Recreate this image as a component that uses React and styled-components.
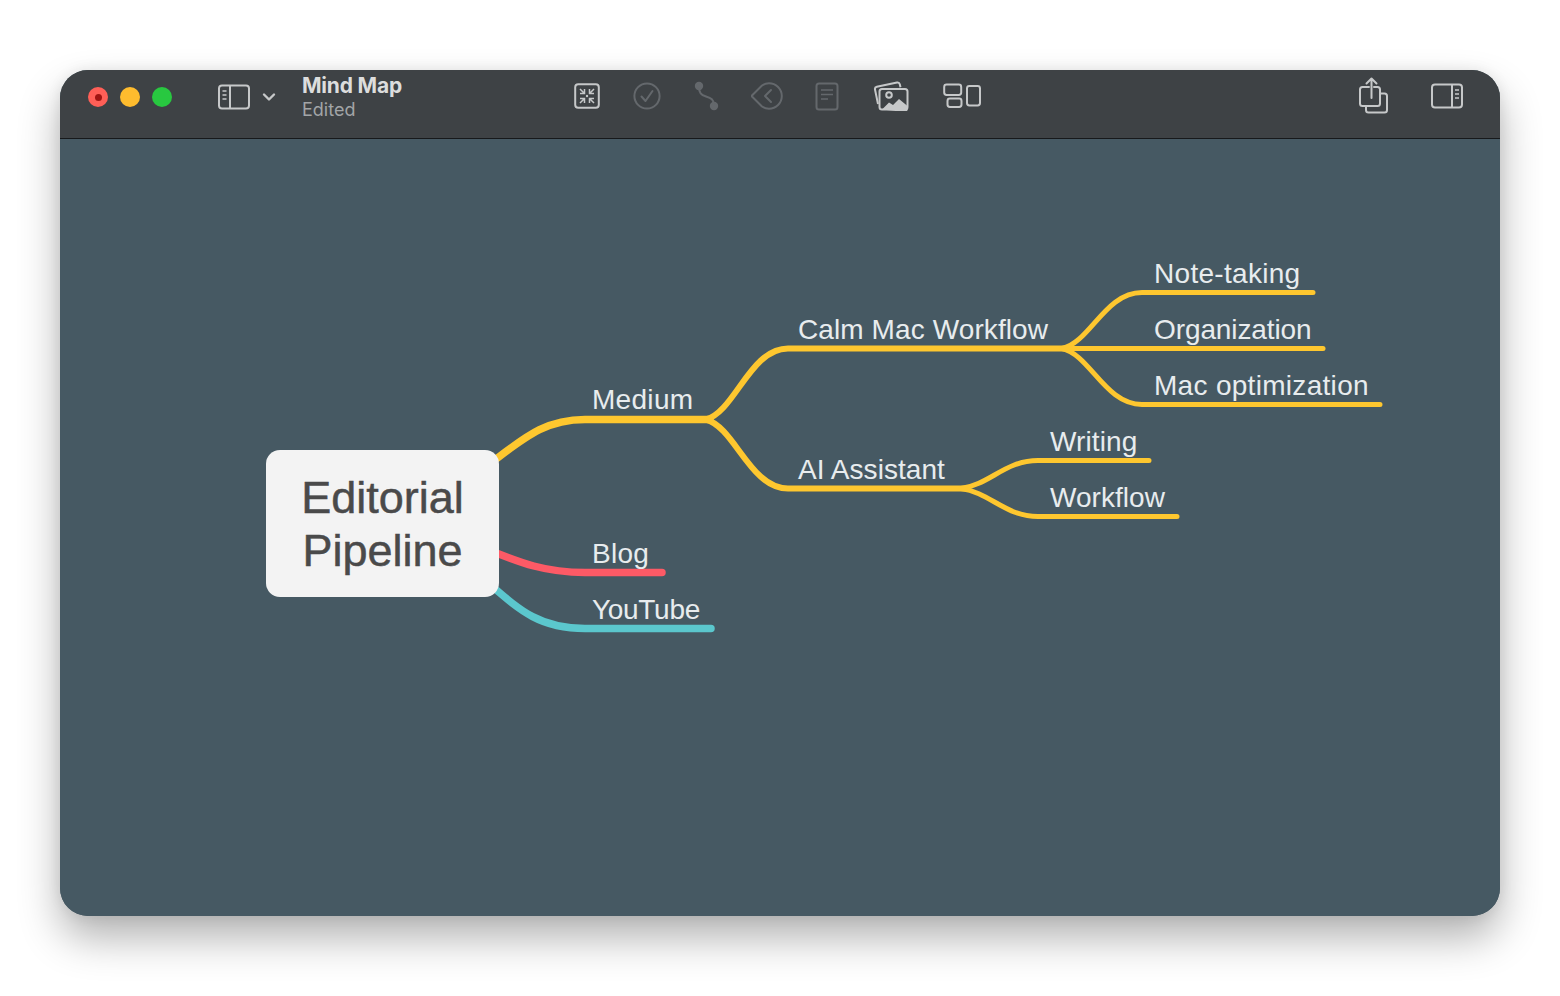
import React from "react";
import styled, { createGlobalStyle } from "styled-components";

const Global = createGlobalStyle`
  html, body { margin: 0; padding: 0; background: #fff; }
  body { font-family: "Liberation Sans", Arial, sans-serif; }
`;

const Page = styled.div`
  width: 1560px;
  height: 996px;
  box-sizing: border-box;
  padding: 70px 60px 80px;
  overflow: hidden;
  background: #fff;
`;

const Window = styled.div`
  height: 846px;
  display: flex;
  flex-direction: column;
  border-radius: 28px;
  overflow: hidden;
  background: #465963;
  box-shadow: 0 22px 42px rgba(0, 0, 0, 0.3), 0 0 14px rgba(0, 0, 0, 0.08);
`;

const TitleBar = styled.header`
  flex: none;
  height: 69px;
  box-sizing: border-box;
  display: flex;
  align-items: center;
  padding: 0 20px 16px 28px;
  background: #3e4245;
  border-bottom: 1px solid #17191b;
`;

const Lights = styled.div`
  display: flex;
  gap: 12px;
  margin-right: 46px;
  margin-top: 2px;
`;

const Light = styled.span`
  width: 20px;
  height: 20px;
  border-radius: 50%;
  background: ${(p) => p.$color};
  display: flex;
  align-items: center;
  justify-content: center;
  &::after {
    content: "";
    width: ${(p) => (p.$dot ? "7px" : "0")};
    height: ${(p) => (p.$dot ? "7px" : "0")};
    border-radius: 50%;
    background: #a01512;
  }
`;

const SidebarToggle = styled.div`
  display: flex;
  align-items: center;
  gap: 12px;
  margin-right: 26px;
  margin-top: 1px;
`;

const TitleBlock = styled.div`
  width: 255px;
  display: flex;
  flex-direction: column;
  margin-top: 2px;
  font-family: Inter, "Liberation Sans", sans-serif;
`;

const Title = styled.div`
  font-size: 21px;
  line-height: 25px;
  font-weight: 700;
  color: #dcdddd;
  letter-spacing: -0.2px;
`;

const Subtitle = styled.div`
  font-size: 18px;
  line-height: 24px;
  color: #a2a5a7;
`;

const ToolGroup = styled.div`
  display: flex;
  align-items: center;
`;

const Slot = styled.div`
  width: ${(p) => p.$w}px;
  display: flex;
  justify-content: center;
`;

const Spacer = styled.div`
  flex: 1;
`;

const RightGroup = styled.div`
  display: flex;
  align-items: center;
  gap: 41px;
  margin-right: 17px;
`;

const Canvas = styled.main`
  flex: 1;
  position: relative;
  background: #465963;
`;

const Lines = styled.svg`
  position: absolute;
  inset: 0;
  width: 100%;
  height: 100%;
`;

const RootNode = styled.div`
  position: absolute;
  left: 206px;
  top: 311px;
  width: 233px;
  height: 147px;
  box-sizing: border-box;
  border-radius: 14px;
  background: #f3f3f3;
  color: #4a4a4a;
  display: flex;
  align-items: center;
  justify-content: center;
  text-align: center;
  font-size: 45px;
  line-height: 53px;
  -webkit-text-stroke: 0.5px #4a4a4a;
`;

const Label = styled.div`
  position: absolute;
  left: ${(p) => p.$x - 60}px;
  top: ${(p) => p.$y - 138}px;
  font-size: 28px;
  line-height: 32px;
  color: #e8ecee;
  white-space: nowrap;
  letter-spacing: ${(p) => p.$ls}px;
`;

const LIGHT = "#c6c8c9";
const DIM = "#64686c";

const SidebarIcon = () => (
  <svg width="32" height="26" viewBox="0 0 32 26" fill="none" stroke={LIGHT} strokeWidth="2">
    <rect x="1" y="1.5" width="30" height="23" rx="3" />
    <path d="M12 1.5v23" />
    <path d="M4.5 7h4M4.5 11h4M4.5 15h4" strokeWidth="1.6" />
  </svg>
);

const Chevron = () => (
  <svg width="14" height="10" viewBox="0 0 14 10" fill="none" stroke={LIGHT} strokeWidth="2.4" strokeLinecap="round" strokeLinejoin="round">
    <path d="M2 2.5l5 5 5-5" />
  </svg>
);

const FocusIcon = () => (
  <svg width="26" height="26" viewBox="0 0 26 26" fill="none" stroke={LIGHT} strokeWidth="2">
    <rect x="1.2" y="1.2" width="23.6" height="23.6" rx="3" />
    <g strokeWidth="1.5">
      <path d="M6 6l4.5 4.5M6 10.5h4.5V6" />
      <path d="M20 6l-4.5 4.5M20 10.5h-4.5V6" />
      <path d="M6 20l4.5-4.5M6 15.5h4.5V20" />
      <path d="M20 20l-4.5-4.5M20 15.5h-4.5V20" />
    </g>
    <circle cx="13" cy="13" r="1.2" fill={LIGHT} stroke="none" />
  </svg>
);

const CheckIcon = () => (
  <svg width="28" height="28" viewBox="0 0 28 28" fill="none" stroke={DIM} strokeWidth="2">
    <circle cx="14" cy="14" r="12.6" />
    <path d="M8.5 14.5l4 4.5 7-10" strokeLinecap="round" strokeLinejoin="round" />
  </svg>
);

const RouteIcon = () => (
  <svg width="26" height="30" viewBox="0 0 26 30" fill="none" stroke={DIM} strokeWidth="2">
    <circle cx="5" cy="5" r="4.2" fill={DIM} stroke="none" />
    <circle cx="20" cy="25" r="4.2" fill={DIM} stroke="none" />
    <path d="M5 6c0 6 2 8 7 9.5 5 1.500 8 3 8 9" />
  </svg>
);

const TagIcon = () => (
  <svg width="33" height="28" viewBox="1 0 33 28" fill="none" stroke={DIM} strokeWidth="2" strokeLinejoin="round">
    <path d="M1.500 14L12 3.500C14.500 1.800 16.500 1.200 19 1.200a12.800 12.800 0 0 1 0 25.600c-2.500 0-4.500-.6-7-2.300z" />
    <path d="M21 8l-6 6 6 6" strokeLinecap="round" />
  </svg>
);

const DocIcon = () => (
  <svg width="24" height="29" viewBox="0 0 24 29" fill="none" stroke={DIM} strokeWidth="2">
    <rect x="1.500" y="1.500" width="21" height="26" rx="2.500" />
    <path d="M6 8h12M6 12.500h12M6 17h7" strokeWidth="1.700" />
  </svg>
);

const PhotosIcon = () => (
  <svg width="36" height="30" viewBox="0 0 36 30" fill="none" stroke={LIGHT} strokeWidth="2">
    <path d="M5 23L2 8.500c-.3-1.500.4-2.500 1.800-2.800L24 1.500c1.500-.3 2.400.3 2.800 1.700l.7 3" />
    <rect x="6.500" y="8" width="28" height="20.500" rx="2.500" fill="#3e4245" />
    <circle cx="16" cy="14" r="2.800" />
    <path d="M9 28.500l7-7 4 2.500 6-6 8.500 7v3.500a2.500 2.500 0 0 1-2.500 2.500z" fill={LIGHT} stroke="none" />
  </svg>
);

const LayoutIcon = () => (
  <svg width="38" height="26" viewBox="0 0 38 26" fill="none" stroke={LIGHT} strokeWidth="2">
    <rect x="1.200" y="1.500" width="17" height="10.500" rx="2.400" />
    <rect x="4.500" y="15.500" width="14" height="8.500" rx="2.400" />
    <rect x="24" y="3" width="13" height="19.500" rx="2.400" />
  </svg>
);

const ShareIcon = () => (
  <svg width="32" height="38" viewBox="0 0 32 38" fill="none" stroke={LIGHT} strokeWidth="2" strokeLinecap="round" strokeLinejoin="round">
    <path d="M11 10H4.500A2.500 2.500 0 0 0 2 12.500v14A2.500 2.500 0 0 0 4.500 29h15a2.500 2.500 0 0 0 2.500-2.500v-14A2.500 2.500 0 0 0 19.500 10H16" />
    <path d="M8 29v4a2.500 2.500 0 0 0 2.500 2.500h16a2.500 2.500 0 0 0 2.500-2.500V19a2.500 2.500 0 0 0-2.500-2.500H22" />
    <path d="M13.500 21V2M8.500 6.500l5-5 5 5" />
  </svg>
);

const RightPanelIcon = () => (
  <svg width="32" height="26" viewBox="0 0 32 26" fill="none" stroke={LIGHT} strokeWidth="2">
    <rect x="1" y="1.500" width="30" height="23" rx="3" />
    <path d="M21 1.500v23" />
    <path d="M24 7h4M24 11h4M24 15h4" strokeWidth="1.600" />
  </svg>
);

const YELLOW = "#fec72f";

const edges = [
  { d: "M490 463C525 437 545 419 585 419H710", c: YELLOW, w: 7.5 },
  { d: "M706 419C735 411 750 348 788 348H1066", c: YELLOW, w: 6 },
  { d: "M706 419C735 427 750 488 788 488H966", c: YELLOW, w: 6 },
  { d: "M1062 348C1090 342 1105 292 1142 292H1313", c: YELLOW, w: 5 },
  { d: "M1062 348H1323", c: YELLOW, w: 5 },
  { d: "M1062 348C1090 354 1105 404 1142 404H1380", c: YELLOW, w: 5 },
  { d: "M961 488C990 484 1005 460 1038 460H1149", c: YELLOW, w: 5 },
  { d: "M961 488C990 492 1005 516 1038 516H1177", c: YELLOW, w: 5 },
  { d: "M490 550C520 562 545 572 585 572H662", c: "#fd5a66", w: 7.5 },
  { d: "M490 584C520 610 540 628 585 628H711", c: "#5bc7cd", w: 7.5 },
];

const labels = [
  ["Medium", 592, 383, 0.3],
  ["Calm Mac Workflow", 798, 313, 0.1],
  ["AI Assistant", 798, 453, 0.05],
  ["Note-taking", 1154, 257, 0.3],
  ["Organization", 1154, 313, -0.1],
  ["Mac optimization", 1154, 369, 0.3],
  ["Writing", 1050, 425, 0.1],
  ["Workflow", 1050, 481, 0.05],
  ["Blog", 592, 537, 0.3],
  ["YouTube", 592, 593, -0.3],
];

export default function App() {
  return (
    <Page>
      <Global />
      <Window>
        <TitleBar>
          <Lights>
            <Light $color="#ff5f57" $dot />
            <Light $color="#febc2e" />
            <Light $color="#28c840" />
          </Lights>
          <SidebarToggle>
            <SidebarIcon />
            <Chevron />
          </SidebarToggle>
          <TitleBlock>
            <Title>Mind Map</Title>
            <Subtitle>Edited</Subtitle>
          </TitleBlock>
          <ToolGroup>
            <Slot $w={60}><FocusIcon /></Slot>
            <Slot $w={60}><CheckIcon /></Slot>
            <Slot $w={60}><RouteIcon /></Slot>
            <Slot $w={60}><TagIcon /></Slot>
            <Slot $w={60}><DocIcon /></Slot>
            <Slot $w={68}><PhotosIcon /></Slot>
            <Slot $w={74}><LayoutIcon /></Slot>
          </ToolGroup>
          <Spacer />
          <RightGroup>
            <ShareIcon />
            <RightPanelIcon />
          </RightGroup>
        </TitleBar>
        <Canvas>
          <Lines viewBox="60 138.500 1440 777">
            {edges.map((e) => (
              <path key={e.d} d={e.d} fill="none" stroke={e.c} strokeWidth={e.w} strokeLinecap="round" />
            ))}
          </Lines>
          <RootNode>Editorial<br />Pipeline</RootNode>
          {labels.map(([t, x, y, ls]) => (
            <Label key={t} $x={x} $y={y} $ls={ls}>{t}</Label>
          ))}
        </Canvas>
      </Window>
    </Page>
  );
}
